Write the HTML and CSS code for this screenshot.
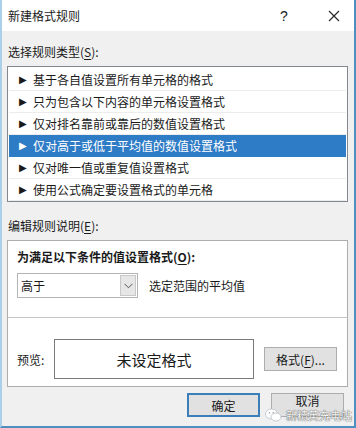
FILE: index.html
```html
<!DOCTYPE html>
<html lang="zh-CN">
<head>
    <meta charset="UTF-8">
    <meta name="viewport" content="width=device-width, initial-scale=1.0">
    <title>新建格式规则</title>
    <link rel="stylesheet" href="styles.css">
</head>
<body>
    <div class="window">
        <div class="titlebar">
            <span class="title">新建格式规则</span>
            <span class="help">?</span>
            <span class="close">
                <svg width="12" height="12" viewBox="0 0 12 12"><path d="M1 1 L11 11 M11 1 L1 11" stroke="#222" stroke-width="1.1" fill="none"/></svg>
            </span>
        </div>
        <div class="content">
            <div class="label">选择规则类型(<u>S</u>):</div>
            <ul class="rule-list">
                <li><span class="arrow">&#9654;</span>基于各自值设置所有单元格的格式</li>
                <li><span class="arrow">&#9654;</span>只为包含以下内容的单元格设置格式</li>
                <li><span class="arrow">&#9654;</span>仅对排名靠前或靠后的数值设置格式</li>
                <li class="selected"><span class="arrow">&#9654;</span>仅对高于或低于平均值的数值设置格式</li>
                <li><span class="arrow">&#9654;</span>仅对唯一值或重复值设置格式</li>
                <li><span class="arrow">&#9654;</span>使用公式确定要设置格式的单元格</li>
            </ul>
            <div class="label label-edit">编辑规则说明(<u>E</u>):</div>
            <div class="edit-box">
                <div class="edit-top">
                    <div class="bold-label">为满足以下条件的值设置格式(<u>O</u>):</div>
                    <div class="cond-row">
                        <div class="combo">
                            <span class="combo-text">高于</span>
                            <span class="combo-btn">
                                <svg width="9" height="6" viewBox="0 0 9 6"><path d="M0.5 0.8 L4.5 4.8 L8.5 0.8" stroke="#555" stroke-width="1" fill="none"/></svg>
                            </span>
                        </div>
                        <span class="cond-text">选定范围的平均值</span>
                    </div>
                </div>
                <div class="preview-row">
                    <span class="preview-label">预览:</span>
                    <div class="preview-box">未设定格式</div>
                    <button class="btn btn-format">格式(<u>F</u>)...</button>
                </div>
            </div>
            <div class="actions">
                <button class="btn btn-ok">确定</button>
                <button class="btn btn-cancel">取消</button>
            </div>
        </div>
        <div class="watermark">
            <svg width="17" height="14" viewBox="0 0 17 14">
                <ellipse cx="6.5" cy="6" rx="6" ry="5" fill="#fff" stroke="#b9c0c6" stroke-width="0.8"/>
                <ellipse cx="11" cy="9" rx="5" ry="4" fill="#fff" stroke="#b9c0c6" stroke-width="0.8"/>
                <circle cx="4.5" cy="4.8" r="0.8" fill="#9aa3ab"/>
                <circle cx="8.3" cy="4.8" r="0.8" fill="#9aa3ab"/>
            </svg>
            <span>新精英充电站</span>
        </div>
    </div>
</body>
</html>
```

FILE: styles.css
```css
body {
    margin: 0;
    padding: 0;
    font-family: "Noto Sans CJK SC", "Liberation Sans", sans-serif;
    font-size: 12px;
    color: #1a1a1a;
    background: #f0f0f0;
}
.window {
    position: relative;
    width: 356px;
    height: 428px;
    box-sizing: border-box;
    background: #f0f0f0;
    border-left: 2px solid #a9cfe9;
    border-right: 2px solid #4f8fc0;
    border-bottom: 2px solid #4f8fc0;
    display: flex;
    flex-direction: column;
}
.titlebar {
    height: 31px;
    background: #fff;
    display: flex;
    align-items: center;
    padding-left: 6px;
}
.title {
    flex: 1;
    font-size: 12px;
}
.help {
    width: 16px;
    text-align: center;
    font-family: "Liberation Sans", sans-serif;
    font-size: 14px;
    margin-right: 34px;
}
.close {
    width: 16px;
    margin-right: 12px;
    display: flex;
    justify-content: center;
}
.content {
    padding: 0 6px 0 5px;
    flex: 1;
    display: flex;
    flex-direction: column;
}
.label {
    height: 18px;
    line-height: 18px;
    margin-top: 12px;
    margin-bottom: 5px;
    padding-left: 1px;
}
.label u, .bold-label u, .btn u {
    text-decoration-thickness: 1px;
    text-underline-offset: 2px;
}
.rule-list {
    list-style: none;
    margin: 0;
    padding: 2px 1px 1px 1px;
    background: #fff;
    border: 1px solid #828790;
    height: 136px;
    box-sizing: border-box;
}
.rule-list li {
    height: 22px;
    line-height: 21px;
    border-bottom: 1px solid #ececec;
    box-sizing: border-box;
    padding-left: 10px;
    white-space: nowrap;
}
.rule-list li.selected {
    background: #2e7bc6;
    color: #fff;
    border-bottom-color: #2e7bc6;
}
.arrow {
    display: inline-block;
    width: 14px;
    font-size: 10px;
    font-family: "DejaVu Sans", sans-serif;
    vertical-align: top;
}
.label-edit {
    margin-top: 15px;
    margin-bottom: 5px;
}
.edit-box {
    background: #fff;
    border: 1px solid #adadad;
    height: 147px;
    box-sizing: border-box;
    display: flex;
    flex-direction: column;
}
.edit-top {
    padding: 7px 9px 0 9px;
    height: 77px;
    box-sizing: border-box;
    border-bottom: 1px solid #c4c4c4;
}
.bold-label {
    font-weight: bold;
    height: 18px;
    line-height: 18px;
}
.cond-row {
    display: flex;
    align-items: center;
    margin-top: 7px;
}
.combo {
    width: 121px;
    height: 25px;
    box-sizing: border-box;
    border: 1px solid #b4b4b4;
    display: flex;
    align-items: center;
}
.combo-text {
    flex: 1;
    padding-left: 3px;
}
.combo-btn {
    width: 16px;
    height: 21px;
    margin-right: 1px;
    background: #e6e6e6;
    border: 1px solid #c8c8c8;
    box-sizing: border-box;
    display: flex;
    align-items: center;
    justify-content: center;
}
.cond-text {
    margin-left: 11px;
}
.preview-row {
    display: flex;
    align-items: center;
    padding: 21px 0 0 9px;
}
.preview-label {
    width: 37px;
}
.preview-box {
    width: 200px;
    height: 40px;
    box-sizing: border-box;
    border: 1px solid #7a7a7a;
    display: flex;
    align-items: center;
    justify-content: center;
    font-size: 15px;
}
.btn {
    font-family: "Noto Sans CJK SC", "Liberation Sans", sans-serif;
    font-size: 12px;
    color: #1a1a1a;
    width: 73px;
    height: 24px;
    padding: 0;
    background: #e1e1e1;
    border: 1px solid #adadad;
}
.btn-format {
    margin-left: 10px;
}
.actions {
    display: flex;
    justify-content: flex-end;
    gap: 11px;
    margin-top: 6px;
    padding-right: 4px;
}
.btn-ok {
    border: 2px solid #3c7fb8;
}
.btn-cancel {
    line-height: 13px;
    padding-bottom: 9px;
}
.watermark {
    position: absolute;
    left: 263px;
    top: 408px;
    display: flex;
    align-items: center;
    gap: 4px;
    font-size: 11px;
    line-height: 12px;
    color: #f4f4f4;
    text-shadow: 0 0 1px #555, 0 0 1px #555;
}
```
